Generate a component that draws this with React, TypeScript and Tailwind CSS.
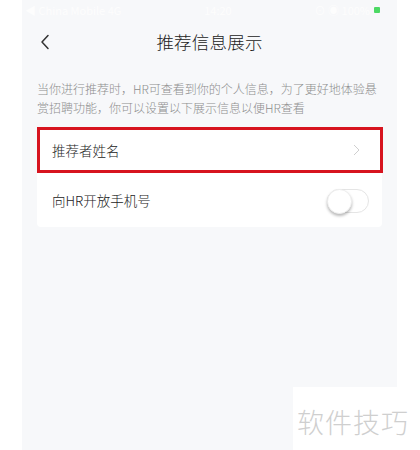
import React from "react";

export default function App() {
  return (
    <div
      className="relative w-[420px] h-[450px] bg-white overflow-hidden"
      style={{ fontFamily: '"Noto Sans CJK SC", "Noto Sans", sans-serif' }}
    >
      <div className="ml-[22px] w-[375px] h-[450px] bg-[#f7f8fa] flex flex-col">
        {/* status bar */}
        <div className="h-[20px] flex items-center justify-between px-[3px] text-[11px] text-[#fdfdfd]">
          <span>◀ China Mobile 4G</span>
          <span>14:20</span>
          <div className="flex items-center gap-1 pr-[14px]">
            <span>⊙ ◉ 100%</span>
            <div className="w-[6px] h-[6px] bg-[#4cd964] rounded-[1px]" />
          </div>
        </div>
        {/* nav bar */}
        <div className="relative h-[44px] flex items-center justify-center">
          <svg
            className="absolute left-[18px] top-[14px]"
            width="10"
            height="16"
            viewBox="0 0 10 16"
            fill="none"
          >
            <path d="M8 1.5 L2 8 L8 14.5" stroke="#333" strokeWidth="1.5" strokeLinecap="round" strokeLinejoin="round" />
          </svg>
          <span className="text-[17.5px] font-light text-[#222] tracking-[0.2px]">推荐信息展示</span>
        </div>
        {/* description */}
        <div className="px-[15px] pt-[15px] text-[12px] font-light leading-[19px] text-[#8e8e8e]">
          当你进行推荐时，HR可查看到你的个人信息，为了更好地体验悬赏招聘功能，你可以设置以下展示信息以便HR查看
        </div>
        {/* card */}
        <div className="mx-[15px] mt-[10px] bg-white rounded-[4px] flex flex-col">
          <div className="relative h-[46px] flex items-center justify-between pl-[15px] pr-[22px] text-[13.5px] font-light text-[#222]">
            <span>推荐者姓名</span>
            <svg width="7" height="12" viewBox="0 0 7 12" fill="none">
              <path d="M1 1 L6 6 L1 11" stroke="#cfcfcf" strokeWidth="1" />
            </svg>
            <div className="absolute left-0 right-[-1px] top-0 h-[46px] border-[3px] border-[#d7141f]" />
          </div>
          <div className="h-[54px] flex items-center justify-between pl-[15px] pr-[13px] text-[13.5px] font-light text-[#222]">
            <span>向HR开放手机号</span>
            <div className="relative w-[42px] h-[24px] rounded-full border border-[#e5e5e5] bg-white mt-[2px]">
              <div className="absolute left-[-1px] top-[-1px] w-[25px] h-[25px] rounded-full bg-white shadow-[0_2px_3px_rgba(0,0,0,0.28)] border border-[#eeeeee]" />
            </div>
          </div>
        </div>
      </div>
      {/* watermark */}
      <div className="absolute left-[293px] top-[387px] w-[127px] h-[63px] bg-white flex items-start pl-[4px] pt-[20px]">
        <span className="text-[27px] leading-[30px] font-light text-[#cfcfcf] tracking-[1px]">软件技巧</span>
      </div>
    </div>
  );
}
